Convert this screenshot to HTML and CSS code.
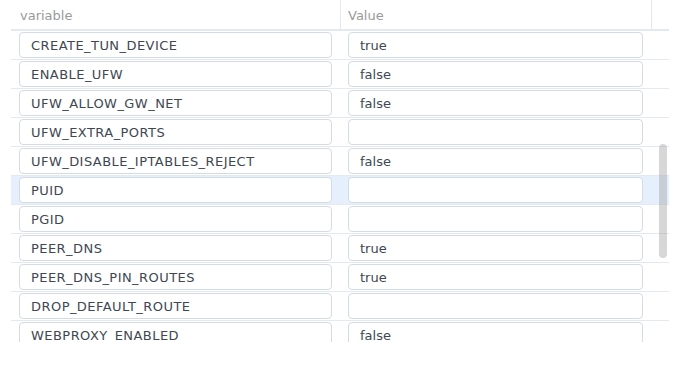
FILE: index.html
```html
<!DOCTYPE html>
<html lang="en">
<head>
    <meta charset="UTF-8">
    <title>Environment</title>
    <link rel="stylesheet" href="styles.css">
</head>
<body>
    <div class="grid">
        <div class="grid-head">
            <div class="head-cell">variable</div>
            <div class="head-cell">Value</div>
            <div class="head-cell gutter"></div>
        </div>

        <div class="grid-body">
            <div id="rows"></div>
            <div class="scroll-thumb"></div>
        </div>
    </div>

    <script>
        const env = [
            { name: 'CREATE_TUN_DEVICE', value: 'true' },
            { name: 'ENABLE_UFW', value: 'false' },
            { name: 'UFW_ALLOW_GW_NET', value: 'false' },
            { name: 'UFW_EXTRA_PORTS', value: '' },
            { name: 'UFW_DISABLE_IPTABLES_REJECT', value: 'false' },
            { name: 'PUID', value: '', selected: true },
            { name: 'PGID', value: '' },
            { name: 'PEER_DNS', value: 'true' },
            { name: 'PEER_DNS_PIN_ROUTES', value: 'true' },
            { name: 'DROP_DEFAULT_ROUTE', value: '' },
            { name: 'WEBPROXY_ENABLED', value: 'false' }
        ];

        document.getElementById('rows').innerHTML = env.map(v => `
            <div class="row ${v.selected ? 'selected' : ''}">
                <div class="cell"><div class="field name">${v.name}</div></div>
                <div class="cell"><div class="field">${v.value}</div></div>
                <div class="cell"></div>
            </div>
        `).join('');
    </script>
</body>
</html>
```

FILE: styles.css
```css
/* Global */
body {
    margin: 0;
    background: #fff;
    font-family: "DejaVu Sans", Verdana, sans-serif;
    font-size: 13px;
    color: #3e4852;
}

/* Grid */
.grid {
    margin-left: 11px;
    width: 658px;
}

.grid-head,
.row {
    display: grid;
    grid-template-columns: 330px 311px 17px;
}

.grid-head {
    height: 29px;
    border-bottom: 1px solid #e4e9ef;
}

.head-cell {
    display: flex;
    align-items: center;
    padding-left: 9px;
    color: #9a9a9a;
    border-right: 1px solid #e4e9ef;
    padding-top: 1px;
}

.head-cell:nth-child(2) {
    padding-left: 7px;
}

.head-cell.gutter {
    border-right: none;
}

.grid-body {
    position: relative;
    height: 311px;
    overflow: hidden;
    border-top: 1px solid #e4e9ef;
}

.row {
    padding: 1px 0;
    border-bottom: 1px solid #e4e9ef;
}

.row.selected {
    background: #e5f0fc;
}

.cell:first-child {
    padding: 0 9px 0 8px;
}

.cell:nth-child(2) {
    padding: 0 9px 0 7px;
}

.field {
    height: 24px;
    line-height: 25px;
    border: 1px solid #d3dce5;
    border-radius: 4px;
    background: #fff;
    padding-left: 11px;
    white-space: nowrap;
    overflow: hidden;
}

.field.name {
    letter-spacing: 0.45px;
}

/* Scrollbar */
.scroll-thumb {
    position: absolute;
    left: 648px;
    top: 113px;
    width: 8px;
    height: 114px;
    border-radius: 4px;
    background: rgba(160, 160, 160, 0.42);
}
```
